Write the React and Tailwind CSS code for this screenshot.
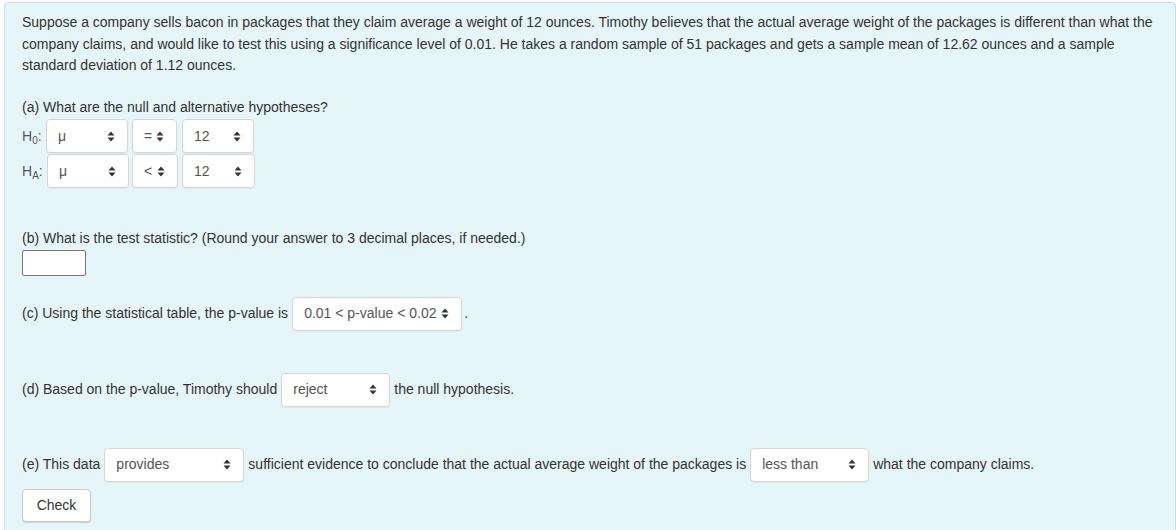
import React from 'react';

const font = { fontFamily: '"Liberation Sans", Arial, sans-serif' };

function Arrows() {
  return (
    <svg width="8" height="11" viewBox="0 0 8 11" className="shrink-0">
      <path d="M4 0.5 L7.5 4.5 L0.5 4.5 Z" fill="#333" />
      <path d="M4 10.5 L7.5 6.5 L0.5 6.5 Z" fill="#333" />
    </svg>
  );
}

function Select({ value, width, className = '' }) {
  return (
    <div
      className={`inline-flex items-center justify-between h-[34px] shrink-0 rounded-[4px] border border-[#d3d7db] bg-white pl-[11px] pr-[12px] text-[14px] text-[#555] shadow-[0_1px_1px_rgba(0,0,0,0.05)] ${className}`}
      style={{ width }}
    >
      <span>{value}</span>
      <Arrows />
    </div>
  );
}

export default function App() {
  return (
    <div className="w-[1176px] h-[530px] overflow-hidden bg-white pt-[2px] pl-[4px]" style={font}>
      <div className="h-[560px] rounded-[4px] border border-[#bfe3ea] bg-[#e6f5f7] pl-[17px] pr-[18px] pt-[9px] text-[14px] text-[#333]">
        <p className="leading-[21.5px]">
          Suppose a company sells bacon in packages that they claim average a weight of 12 ounces. Timothy believes that the actual average weight of the packages is different than what the company claims, and would like to test this using a significance level of 0.01. He takes a random sample of 51 packages and gets a sample mean of 12.62 ounces and a sample standard deviation of 1.12 ounces.
        </p>

        <p className="mt-[20px] leading-[21.5px]">(a) What are the null and alternative hypotheses?</p>
        <div className="mt-[1px] flex flex-col">
          <div className="flex items-center">
            <span className="w-[24px] leading-none text-[#555]">H<sub className="text-[10px]">0</sub>:</span>
            <Select value="μ" width={82} className="h-[33px]" />
            <Select value="=" width={45} className="ml-[4px] pl-[10px] h-[33px]" />
            <Select value="12" width={72} className="ml-[5px] h-[33px]" />
          </div>
          <div className="mt-[1px] flex items-center">
            <span className="w-[25px] leading-none text-[#555]">H<sub className="text-[10px]">A</sub>:</span>
            <Select value="μ" width={82} className="h-[33px]" />
            <Select value="<" width={46} className="ml-[3px] pl-[10px] h-[33px]" />
            <Select value="12" width={73} className="ml-[4px] h-[33px]" />
          </div>
        </div>

        <p className="mt-[40px] leading-[21.5px]">(b) What is the test statistic? (Round your answer to 3 decimal places, if needed.)</p>
        <div className="h-[26px] w-[64px] rounded-[2px] border border-[#767676] bg-white" />

        <div className="mt-[21px] flex items-center gap-[4px]">
          <span>(c) Using the statistical table, the p-value is</span>
          <Select value="0.01 < p-value < 0.02" width={170} />
          <span className="-ml-[2px]">.</span>
        </div>

        <div className="mt-[42px] flex items-center gap-[4px]">
          <span>(d) Based on the p-value, Timothy should</span>
          <Select value="reject" width={109} />
          <span>the null hypothesis.</span>
        </div>

        <div className="mt-[41px] flex items-center gap-[4px]">
          <span>(e) This data</span>
          <Select value="provides" width={140} />
          <span>sufficient evidence to conclude that the actual average weight of the packages is</span>
          <Select value="less than" width={119} />
          <span>what the company claims.</span>
        </div>

        <button className="mt-[7px] h-[33px] w-[69px] rounded-[4px] border border-[#ccc] bg-white text-[14px] text-[#333] shadow-[0_1px_1px_rgba(0,0,0,0.15)]">
          Check
        </button>
      </div>
    </div>
  );
}
